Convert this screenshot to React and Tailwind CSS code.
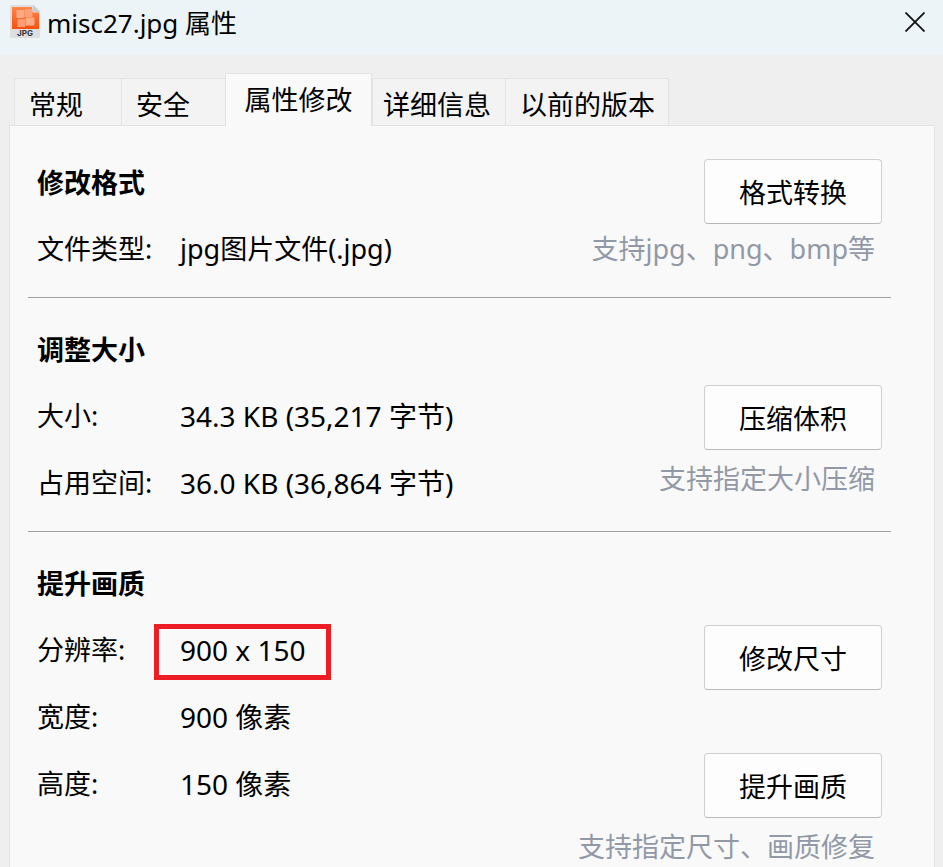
const TABS = [
  { name: "常规", width: "w-[107px] pl-3.5" },
  { name: "安全", width: "w-[104px] pl-3.5" },
  { name: "属性修改", width: "w-[147px] justify-center", active: true },
  { name: "详细信息", width: "w-[133px] pl-2.5" },
  { name: "以前的版本", width: "w-[164px] pl-3.5" },
];

function FileIcon() {
  return (
    <svg viewBox="0 0 30 34" className="h-[34px] w-[30px]" aria-hidden="true">
      <defs>
        <linearGradient id="orange" x1="0" y1="0" x2="0" y2="1">
          <stop offset="0" stopColor="#ff8548" />
          <stop offset="1" stopColor="#fa4f0e" />
        </linearGradient>
      </defs>
      <path d="M1 0H24L30 6V32Q30 33 29 33H1Q0 33 0 32V1Q0 0 1 0Z" fill="#dedede" />
      <path d="M2 2H22V6Q22 7.500 23.500 7.500H29V24H2Z" fill="url(#orange)" />
      <path d="M23 0L30 7H24Q23 7 23 6Z" fill="#c6cdd2" />
      <g fill="#ffab85">
        <rect x="6.500" y="5" width="8" height="8" rx="0.500" />
        <rect x="15" y="4" width="7.500" height="8" rx="0.500" fill="#ffa077" />
        <rect x="7.500" y="14" width="7.500" height="8" rx="0.500" fill="#ff9c72" />
        <rect x="15.500" y="12.500" width="9" height="8" rx="0.500" />
      </g>
      <text x="15" y="31" textAnchor="middle" fontSize="8" fontWeight="700" fontFamily="Inter, sans-serif" fill="#333">
        JPG
      </text>
    </svg>
  );
}

function CloseIcon() {
  return (
    <svg viewBox="0 0 20 20" className="size-5" fill="none" stroke="#111" strokeWidth="1.8" aria-hidden="true">
      <path d="M0.5 0.5L19.5 19.5M19.5 0.5L0.5 19.5" />
    </svg>
  );
}

function Section({ title, rows, valueSize = "text-[28px]", className = "", children }) {
  return (
    <section className={`flex justify-between ${className}`}>
      <div className="pl-[9px]">
        <h2 className="flex h-16 items-center font-bold">{title}</h2>
        <dl>
          {rows.map(([label, value, marked]) => (
            <div key={label} className="flex h-[67px] items-center">
              <dt className="w-[143px] shrink-0">{label}</dt>
              <dd className={`relative whitespace-nowrap ${valueSize}`}>
                {value}
                {marked && (
                  <span className="absolute -inset-x-[26px] -top-1.5 -bottom-2.5 border-5 border-[#ee1c25]" />
                )}
              </dd>
            </div>
          ))}
        </dl>
      </div>
      <div className="flex flex-col items-end pr-[9px]">{children}</div>
    </section>
  );
}

function ActionButton({ children }) {
  return (
    <button
      type="button"
      className="h-[65px] w-[178px] shrink-0 rounded border border-[#d0d0d0] border-b-[#b8b8b8] bg-[#fdfdfd] pt-0.5"
    >
      {children}
    </button>
  );
}

function Hint({ className = "h-[58px]", children }) {
  return (
    <p className={`flex shrink-0 items-center pr-[7px] whitespace-nowrap text-[#9299a6] ${className}`}>{children}</p>
  );
}

export default function App() {
  return (
    <div className="flex h-screen flex-col overflow-hidden bg-[#efefef] font-['Noto_Sans','Noto_Sans_CJK_SC',sans-serif] text-[27px] leading-10 text-black">
      <header className="flex h-[55px] shrink-0 items-start justify-between bg-[#ecf4f7] pr-[18px] pl-2.5">
        <div className="flex h-11 items-center gap-[7px]">
          <FileIcon />
          <h1 className="pt-0.5 text-[26px]">misc27.jpg 属性</h1>
        </div>
        <button type="button" aria-label="关闭" className="flex h-11 items-center">
          <CloseIcon />
        </button>
      </header>

      <div role="tablist" className="mt-[18px] flex h-[52px] shrink-0 items-end pl-3.5">
        {TABS.map((tab) => (
          <button
            key={tab.name}
            type="button"
            role="tab"
            aria-selected={Boolean(tab.active)}
            className={`flex shrink-0 items-center whitespace-nowrap border-[#e3e3e3] ${tab.width} ${
              tab.active
                ? "relative -mb-px h-[53px] rounded-t-xs border-x border-t bg-[#f9f9f9]"
                : "h-[47px] border-t border-l bg-[#f3f3f3] pt-1.5 last:border-r"
            }`}
          >
            {tab.name}
          </button>
        ))}
      </div>

      <main className="mr-2 ml-[9px] grow border border-[#e3e3e3] bg-[#f9f9f9] pt-[25px] pr-[43px] pl-[18px]">
        <Section
          title="修改格式"
          className="pb-[15px]"
          valueSize="text-[27px]"
          rows={[["文件类型:", "jpg图片文件(.jpg)"]]}
        >
          <div className="flex flex-col items-end pt-2">
            <ActionButton>格式转换</ActionButton>
            <Hint className="h-[50px]">支持jpg、png、bmp等</Hint>
          </div>
        </Section>

        <hr className="border-[#a0a0a0]" />

        <Section
          title="调整大小"
          className="pt-5 pb-[15px]"
          rows={[
            ["大小:", "34.3 KB (35,217 字节)"],
            ["占用空间:", "36.0 KB (36,864 字节)"],
          ]}
        >
          <div className="flex flex-col items-end pt-[67px]">
            <ActionButton>压缩体积</ActionButton>
            <Hint>支持指定大小压缩</Hint>
          </div>
        </Section>

        <hr className="border-[#a0a0a0]" />

        <Section
          title="提升画质"
          className="pt-5"
          rows={[
            ["分辨率:", "900 x 150", true],
            ["宽度:", "900 像素"],
            ["高度:", "150 像素"],
          ]}
        >
          <div className="flex flex-col items-end pt-[73px]">
            <ActionButton>修改尺寸</ActionButton>
            <div className="flex flex-col items-end pt-[63px]">
              <ActionButton>提升画质</ActionButton>
              <Hint>支持指定尺寸、画质修复</Hint>
            </div>
          </div>
        </Section>
      </main>
    </div>
  );
}
